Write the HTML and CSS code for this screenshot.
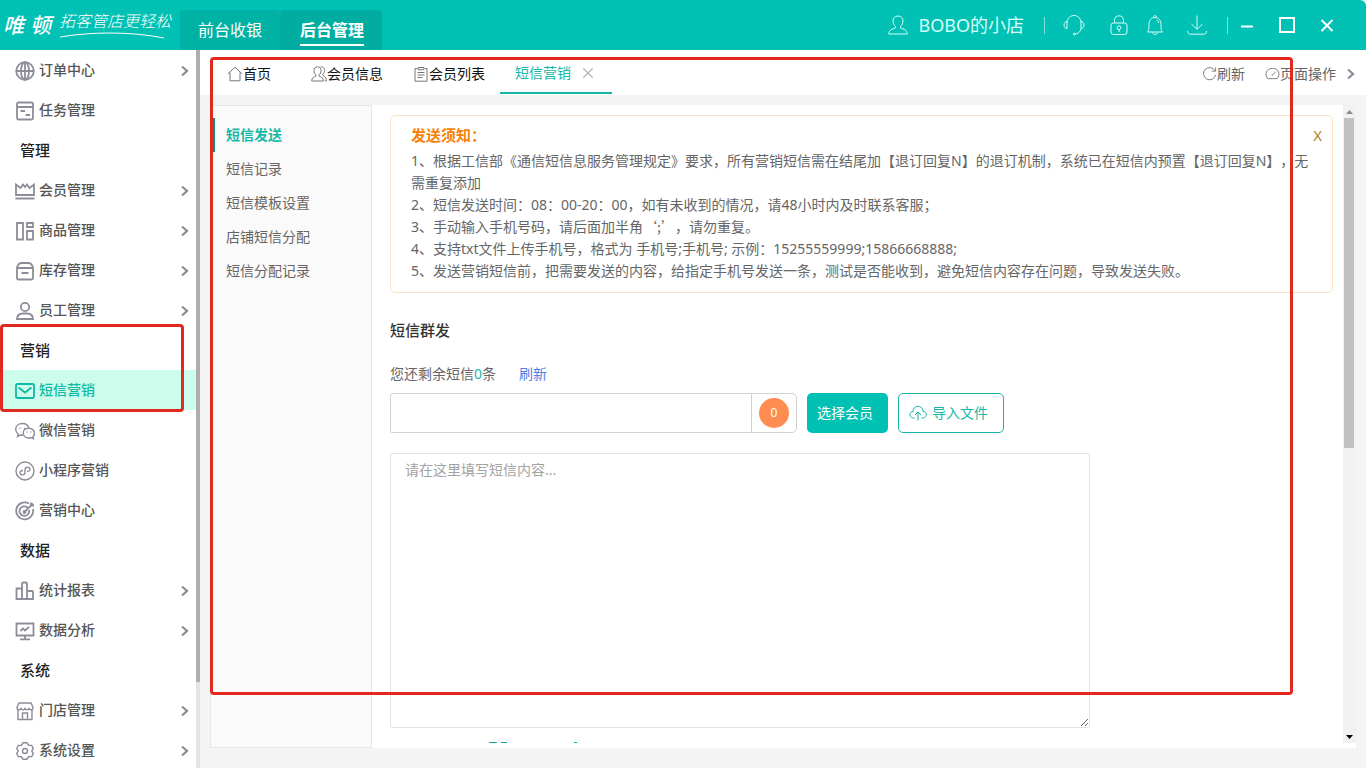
FILE: index.html
```html
<!DOCTYPE html>
<html lang="zh-CN">
<head>
<meta charset="utf-8">
<title>短信营销</title>
<meta name="viewport" content="width=device-width, initial-scale=1">
<link rel="stylesheet" href="styles.css">
</head>
<body>
<svg class="defs" aria-hidden="true">
  <symbol id="chevron" viewBox="0 0 10 12"><path d="M2 1.500 7 6 2 10.500" stroke-width="2.300"/></symbol>
</svg>

<header class="topbar">
  <div class="brand"><span class="brand-name"><span>唯</span><span>顿</span></span><span class="brand-slogan">拓客管店更轻松<svg class="swash" viewBox="0 0 106 8"><path d="M1 6C30 1 70 0 105 7"/></svg></span></div>
  <nav class="modes">
    <a href="#" class="mode">前台收银</a>
    <a href="#" class="mode current"><span>后台管理</span></a>
  </nav>
  <div class="tools">
    <a href="#" class="shop"><svg class="ic20" viewBox="0 0 20 20"><path d="M10 1C6.500 1 5 3.500 5 6c0 2.500 1.300 4.500 2.500 5.500v1.500C4 14.200 1 15 .7 19h18.600c-.3-4-3.300-4.800-6.800-6v-1.500C13.700 10.500 15 8.500 15 6c0-2.500-1.500-5-5-5z"/></svg>BOBO的小店</a>
    <span class="rule"></span>
    <button class="tool support" aria-label="客服"><svg class="ic22" viewBox="0 0 22 22"><path d="M4 8C4.500 4 7.500 1.500 11 1.500S17.500 4 18 8M4 7.500c-2 0-3 1.500-3 3.500s1 3.500 3 3.500zM18 7.500c2 0 3 1.500 3 3.500s-1 3.500-3 3.500zM18 14.500c-.5 3-2.500 5-5 5.500"/><circle cx="11.500" cy="20" r="1"/></svg></button>
    <button class="tool" aria-label="锁屏"><svg class="ic20" viewBox="0 0 20 20"><rect x="2" y="8" width="16" height="11.500" rx="2.500"/><path d="M5.500 8V5.500C5.500 2.500 7.300.8 10 .8s4.500 1.700 4.500 4.700V8M10 14.500V17"/><circle cx="10" cy="12.700" r="1.900"/></svg></button>
    <button class="tool bell" aria-label="通知"><svg class="ic20" viewBox="0 0 20 20"><path d="M2.500 17c1.300-1.500 1.500-3 1.500-7.500C4 5 6.500 2.500 10 2.500s6 2.500 6 7c0 4.500.2 6 1.500 7.500zM8.500 2.500C8.500 0 11.500 0 11.500 2.500M7.500 17.500c.5 2.500 4.500 2.500 5 0M11.500 5c1.500.5 2.200 1.500 2.300 3"/></svg></button>
    <button class="tool download" aria-label="下载"><svg class="ic20" viewBox="0 0 20 20"><path d="M10 .5V14M4.500 9l5.500 5.300L15.500 9M.6 16c0 2.500 1 3.200 3 3.200h12.800c2 0 3-.7 3-3.200"/></svg></button>
    <span class="rule"></span>
    <button class="win" aria-label="最小化"><svg viewBox="0 0 18 18"><path d="M3 10.500h12"/></svg></button>
    <button class="win" aria-label="最大化"><svg viewBox="0 0 18 18"><path d="M2 2h14v14H2z"/></svg></button>
    <button class="win" aria-label="关闭"><svg viewBox="0 0 18 18"><path d="m3.500 4 11 11m0-11-11 11"/></svg></button>
  </div>
</header>

<div class="shell">
  <nav class="sidebar">
    <div class="menu">
      <a href="#" class="item"><svg viewBox="0 0 20 20"><circle cx="10" cy="10" r="8.800"/><ellipse cx="10" cy="10" rx="4" ry="8.800"/><path d="M1.500 10h17M10 1v18"/></svg><span>订单中心</span><svg class="arrow"><use href="#chevron"/></svg></a>
      <a href="#" class="item"><svg viewBox="0 0 20 20"><rect x="2" y="1.500" width="16" height="17" rx="1.500"/><path d="M2 6h16M5.500 10H10M10.500 14H15"/></svg><span>任务管理</span></a>
      <h2 class="group">管理</h2>
      <a href="#" class="item"><svg viewBox="0 0 20 20"><path d="M1 3.500V14h18V3.500L14.500 7 12 3.500 10 6 8 3.500 5.500 7zM.5 17.500h19"/></svg><span>会员管理</span><svg class="arrow"><use href="#chevron"/></svg></a>
      <a href="#" class="item"><svg viewBox="0 0 20 20"><path d="M2 2h6v16.500H2zM12 2h6v4h-6zM12 10h6v8.500h-6z"/></svg><span>商品管理</span><svg class="arrow"><use href="#chevron"/></svg></a>
      <a href="#" class="item"><svg viewBox="0 0 20 20"><path d="M2 7h16v10q0 1.500-1.500 1.500h-13Q2 18.500 2 17zM2 7c.5-3 2.500-5 5-5h6c2.500 0 4.500 2 5 5M6.500 12h7"/></svg><span>库存管理</span><svg class="arrow"><use href="#chevron"/></svg></a>
      <a href="#" class="item"><svg viewBox="0 0 20 20"><circle cx="10" cy="6" r="4.200"/><path d="M2 18c.2-4 3-5.500 6-5.500h4c3 0 5.800 1.500 6 5.500z"/></svg><span>员工管理</span><svg class="arrow"><use href="#chevron"/></svg></a>
      <h2 class="group">营销</h2>
      <a href="#" class="item active"><svg viewBox="0 0 20 20"><rect x="1" y="3" width="18" height="14" rx="1.500"/><path d="m3.500 6.500 6.500 5 6.500-5"/></svg><span>短信营销</span></a>
      <a href="#" class="item"><svg class="thin" viewBox="0 0 20 20"><path d="M13.800 7C13 4 10.500 2.500 7.500 2.500 3.500 2.500.7 5 .7 8.500c0 2 1 3.500 2.500 4.600L2.500 15.500l3-1.500 2.800.3"/><path d="M13.800 7.200c-3.300 0-5.600 2.200-5.600 4.900s2.300 4.900 5.600 4.900l2.400-.4 2.200 1.100-.5-2c1-.9 1.600-2 1.600-3.600 0-2.700-2.400-4.900-5.700-4.900zM5 6.700v1M9.500 6.700v1M12 10.500v1M15.800 10.500v1"/></svg><span>微信营销</span></a>
      <a href="#" class="item"><svg class="thin" viewBox="0 0 20 20"><circle cx="10" cy="10" r="9"/><path d="M8 9.500C5.500 9.500 4.800 11 5 12.200c.4 2.200 4.800 2.400 5-.7V8.500c.2-3 4.600-2.900 5-.7.200 1.200-.5 2.700-3 2.700"/></svg><span>小程序营销</span></a>
      <a href="#" class="item"><svg viewBox="0 0 20 20"><path d="M14 2.500A8.500 8.500 0 1 0 18 8M12.500 6.500A4.800 4.800 0 1 0 14 9M9.500 11 18 2.500M16 1.500v3h3"/><circle cx="9.500" cy="11" r="1"/></svg><span>营销中心</span></a>
      <h2 class="group">数据</h2>
      <a href="#" class="item"><svg viewBox="0 0 20 20"><path d="M1.500 7.500H7V18H1.500zM7 3q0-1.500 1.500-1.500h2Q12 1.500 12 3v15H7zM12 10h5q1 0 1 1v7h-6z"/></svg><span>统计报表</span><svg class="arrow"><use href="#chevron"/></svg></a>
      <a href="#" class="item"><svg viewBox="0 0 20 20"><path d="M1.500 2.500h17v12h-17zM10 14.500V18M5 18.300h10M5.500 10 8 7.500l2 2L14 6"/></svg><span>数据分析</span><svg class="arrow"><use href="#chevron"/></svg></a>
      <h2 class="group">系统</h2>
      <a href="#" class="item"><svg class="thin" viewBox="0 0 20 20"><path d="M3 9v9.500h14V9M4 2h12l2 4.500c0 3-4 3-4 .3 0 2.700-4 2.700-4 0 0 2.700-4 2.700-4 0 0 2.700-4 2.700-4-.3zM7.500 18v-6h5v6"/></svg><span>门店管理</span><svg class="arrow"><use href="#chevron"/></svg></a>
      <a href="#" class="item"><svg class="thin" viewBox="0 0 20 20"><path d="M8 1.800h4l1.500 2.400 3.200.2 1.600 3L16.800 10l1.500 2.600-1.600 3-3.200.2L12 18.200H8l-1.500-2.400-3.200-.2-1.600-3L3.200 10 1.700 7.400l1.600-3 3.200-.2z"/><circle cx="10" cy="10" r="2.500"/></svg><span>系统设置</span><svg class="arrow"><use href="#chevron"/></svg></a>
    </div>
    <div class="side-track" aria-hidden="true"><div class="side-thumb"></div></div>
  </nav>

  <main class="main">
    <div class="tabs">
      <a href="#" class="tab home"><svg viewBox="0 0 16 16"><path d="M.8 8 8 1.200 15.200 8M3 6.500v8.300h10V6.500"/></svg>首页</a>
      <a href="#" class="tab"><svg viewBox="0 0 16 16"><path d="M6.500.8C4 .8 3 2.500 3 4.800c0 1.800.8 3 1.800 3.900v1.500C2.500 11 .7 12 .7 15h11.600c0-3-1.800-4-4.100-4.800V8.700C9.200 7.800 10 6.600 10 4.800c0-2.300-1-4-3.500-4zM9.500 1c3.500-.5 4 1.500 4 3.500 0 1.800-.8 3-1.700 3.900v1c2 .8 3.500 2 3.500 5.600h-1.500"/></svg>会员信息</a>
      <a href="#" class="tab"><svg viewBox="0 0 16 16"><path d="M4 2.500H2v12.700h12V2.500h-2M5 1.500h6v2.200H5zM4.500 6.500h7M4.500 9h7M4.500 11.500h5"/></svg>会员列表</a>
      <div class="tab selected"><a href="#">短信营销</a><button class="close" aria-label="关闭标签"><svg viewBox="0 0 12 12"><path d="m2 2 8 8m0-8-8 8"/></svg></button></div>
      <div class="actions">
        <a href="#"><svg viewBox="0 0 16 16"><path d="M13.800 5A6.500 6.500 0 1 0 14.500 9.500M14.500 1.500V5.500h-4"/></svg>刷新</a>
        <a href="#"><svg viewBox="0 0 16 16"><path d="M3 13.500C-1 9 1.500 2.500 8 2.500s9 6.500 5 11zM8 9.500l3.500-3.500M7 9.500h1.500"/></svg>页面操作<svg class="arrow"><use href="#chevron"/></svg></a>
      </div>
    </div>

    <div class="workspace">
      <nav class="subnav">
        <a href="#" class="on">短信发送</a>
        <a href="#">短信记录</a>
        <a href="#">短信模板设置</a>
        <a href="#">店铺短信分配</a>
        <a href="#">短信分配记录</a>
      </nav>
      <div class="page">
        <section class="notice">
          <div class="notice-head"><h3>发送须知：</h3><button aria-label="关闭须知">X</button></div>
          <p>1、根据工信部《通信短信息服务管理规定》要求，所有营销短信需在结尾加【退订回复N】的退订机制，系统已在短信内预置【退订回复N】，无需重复添加</p>
          <p>2、短信发送时间：08：00-20：00，如有未收到的情况，请48小时内及时联系客服；</p>
          <p>3、手动输入手机号码，请后面加半角<span class="cjk">‘;’</span>，请勿重复。</p>
          <p>4、支持txt文件上传手机号，格式为 手机号;手机号; 示例：15255559999;15866668888;</p>
          <p>5、发送营销短信前，把需要发送的内容，给指定手机号发送一条，测试是否能收到，避免短信内容存在问题，导致发送失败。</p>
        </section>
        <h3 class="heading">短信群发</h3>
        <p class="balance"><span>您还剩余短信<b>0</b>条</span><a href="#">刷新</a></p>
        <div class="recipients">
          <div class="phone"><input type="text" aria-label="手机号"><span class="count"><i>0</i></span></div>
          <button class="btn solid">选择会员</button>
          <button class="btn outline"><svg viewBox="0 0 18 18"><path d="M5.500 14H4.500C-.5 13.500 0 7.500 4 7.500 4 .5 14 .5 14 7.500c4.500 0 4.500 6.500-.5 6.500h-1M9 16.500V8.500M6 11l3-3 3 3"/></svg>导入文件</button>
        </div>
        <textarea class="message" aria-label="短信内容" placeholder="请在这里填写短信内容..."></textarea>
        <svg class="peek" viewBox="0 0 90 1" aria-hidden="true"><path d="M0 .5h8M12 .5h6M85 .5h3"/></svg>
      </div>
      <div class="track" aria-hidden="true">
        <svg viewBox="0 0 13 13"><path d="m3 9 3.500-4L10 9z" fill="#8b8b8b"/></svg>
        <div class="thumb"></div>
        <svg viewBox="0 0 13 13"><path d="m3 5 3.500 4L10 5z" fill="#000"/></svg>
      </div>
    </div>
  </main>
</div>

<div class="mark mark-menu"></div>
<div class="mark mark-page"></div>
</body>
</html>
```

FILE: styles.css
```css
* { box-sizing: border-box; }

body {
  margin: 0;
  height: 100vh;
  display: flex;
  flex-direction: column;
  overflow: hidden;
  position: relative;
  background: #f4f4f4;
  color: #666;
  font: 14px/20px "Noto Sans", "Noto Sans CJK SC", sans-serif;
}

a { color: inherit; text-decoration: none; }
h2, h3, p { margin: 0; }
button { font: inherit; color: inherit; background: none; border: 0; padding: 0; }
svg { fill: none; stroke: currentColor; flex: none; }
.defs { display: none; }
.cjk { font-family: "Noto Sans CJK SC", sans-serif; line-height: 16px; }

/* Title bar */
.topbar {
  flex: none;
  height: 50px;
  display: flex;
  align-items: center;
  background: #00c1b3;
  border-top-right-radius: 6px;
  color: #fff;
}
.brand { width: 180px; display: flex; align-items: center; padding-left: 3px; gap: 8px; }
.brand-name { display: flex; gap: 6px; font-size: 21px; line-height: 32px; font-style: italic; font-weight: 500; }
.brand-slogan { display: flex; flex-direction: column; font-size: 16px; line-height: 20px; font-style: italic; font-weight: 300; }
.swash { width: 106px; height: 8px; }
.modes { display: flex; align-self: flex-end; }
.mode {
  height: 40px;
  padding: 0 18px;
  display: flex;
  align-items: center;
  border-radius: 4px 4px 0 0;
  background: #00b2a4;
  font-size: 16px;
  line-height: 24px;
}
.mode.current { background: #00ada0; padding: 2px 18px 0 20px; font-weight: 700; }
.current span { border-bottom: 2px solid #fff; line-height: 28px; }
.tools { margin-left: auto; display: flex; align-items: center; padding-right: 30px; color: #d5fffb; }
.ic20 { width: 20px; height: 20px; }
.ic22 { width: 22px; height: 22px; }
.tool, .win, .shop { display: flex; align-items: center; }
.shop { gap: 10px; font-size: 18px; margin-right: 20px; }
.rule { width: 1px; height: 17px; background: #7fe0d9; }
.support { margin: 0 24px 0 18px; }
.bell { margin: 0 22px 0 16px; }
.download { margin-right: 20px; }
.win { margin-left: 22px; }
.rule + .win { margin-left: 10px; }
.win svg { width: 18px; height: 18px; stroke: #fff; stroke-width: 2; }

/* Sidebar */
.shell { flex: 1; min-height: 0; display: flex; }
.sidebar { flex: none; width: 200px; display: flex; background: #fff; overflow: hidden; }
.menu { flex: 1; }
.item, .group { height: 40px; display: flex; align-items: center; }
.item { padding: 0 6px 0 15px; gap: 4px; color: #555; font-weight: 500; }
.item svg { width: 20px; height: 20px; color: #8d8d99; stroke-width: 1.8; margin-top: 2px; }
.item .thin { stroke-width: 1.400; }
.item .arrow, .arrow { width: 10px; height: 12px; margin-left: auto; color: #8d8d99; }
.group { padding-left: 20px; color: #222; font-size: 15px; font-weight: 500; }
.item.active { background: #ccfdec; color: #0fb9a5; }
.item.active svg { color: #0fb9a5; }
.side-track { width: 4px; background: #e4e4e4; }
.side-thumb { height: 88%; background: #aeaeae; }

/* Tabs */
.main { flex: 1; min-width: 0; display: flex; flex-direction: column; }
.tabs { flex: none; height: 45px; display: flex; background: #fff; padding: 0 10px 0 12px; }
.tab { height: 44px; padding: 4px 15px 0; display: flex; align-items: center; color: #111; }
.tab > svg, .actions svg { width: 16px; height: 16px; color: #777; }
.home { margin-right: 10px; }
.selected { border-bottom: 2px solid #15b8a6; color: #15b8a6; gap: 10px; padding-right: 17px; }
.close, .close svg { display: flex; width: 14px; height: 14px; color: #aaa; }
.actions { margin-left: auto; display: flex; gap: 20px; padding-top: 2px; }
.actions a { display: flex; align-items: center; }
.actions svg:first-child { width: 15px; height: 15px; }
.actions svg.arrow { width: 10px; height: 12px; margin-left: 10px; color: #8d8d99; }

/* Workspace */
.workspace { flex: 1; min-height: 0; display: flex; margin: 10px 10px 20px; background: #fff; }
.subnav {
  flex: none;
  width: 162px;
  padding-top: 12px;
  display: flex;
  flex-direction: column;
  background: #fafafa;
  border: 1px solid #e6e6e6;
}
.subnav a { line-height: 34px; padding-left: 11px; border-left: 4px solid transparent; }
.subnav .on { color: #15b8a6; font-weight: 700; border-left-color: #138a7e; }
.page { flex: 1; min-width: 0; overflow: hidden; padding: 10px 10px 0 18px; margin-bottom: 5px; }
.notice { border: 1px solid #fbe3c4; border-radius: 5px; padding: 4px 20px 10px; line-height: 22px; text-spacing-trim: space-all; }
.notice-head { display: flex; justify-content: space-between; }
.notice-head h3 { font-size: 15px; line-height: 30px; color: #f7820a; }
.notice-head button { color: #b08336; margin-right: -10px; font-size: 15px; }
.heading { margin-top: 25px; font-size: 15px; line-height: 24px; color: #333; font-weight: 500; }
.balance { margin-top: 22px; display: flex; gap: 23px; }
.balance b { color: #15b8a6; font-weight: 400; }
.balance a { color: #4f80e8; }
.recipients { margin-top: 9px; display: flex; gap: 10px; }
.phone { width: 407px; height: 40px; display: flex; border: 1px solid #d2d2d2; border-radius: 2px 5px 5px 2px; }
.phone input { flex: 1; min-width: 0; border: 0; border-right: 1px solid #d2d2d2; padding: 0 10px; font: inherit; outline: 0; background: none; }
.count { width: 44px; display: flex; align-items: center; justify-content: center; }
.count i { width: 30px; line-height: 30px; border-radius: 50%; background: #ff8d51; color: #fff; font-style: normal; text-align: center; font-size: 12px; }
.btn { height: 40px; padding: 0 10px; border-radius: 5px; display: flex; align-items: center; }
.solid { background: #00c1b3; color: #fff; padding: 0 15px 0 10px; }
.outline { border: 1px solid #15b8a6; color: #15b8a6; gap: 5px; padding-right: 15px; }
.outline svg { width: 18px; height: 18px; }
.message {
  display: block;
  width: 700px;
  max-width: 100%;
  height: 275px;
  margin-top: 20px;
  padding: 6px 14px;
  border: 1px solid #e2e2e2;
  border-radius: 2px;
  font: inherit;
  color: #666;
  outline: 0;
}
.message::placeholder { color: #a3a3a3; }
.peek { display: block; width: 90px; height: 1px; margin: 14px 0 0 99px; color: #15a899; }
.track { flex: none; width: 13px; margin-bottom: 5px; display: flex; flex-direction: column; background: #f1f1f1; }
.track svg { width: 13px; height: 13px; stroke: none; }
.thumb { height: 330px; margin: 0 2px 0 1px; background: #c1c1c1; }
.track svg:last-child { margin-top: auto; }

/* Highlight frames */
.mark { position: absolute; border: 3px solid #e1291d; border-radius: 4px; pointer-events: none; }
.mark-menu { left: 0; top: 324px; width: 184px; height: 88px; }
.mark-page { left: 210px; top: 57px; width: 1083px; height: 638px; }
```
